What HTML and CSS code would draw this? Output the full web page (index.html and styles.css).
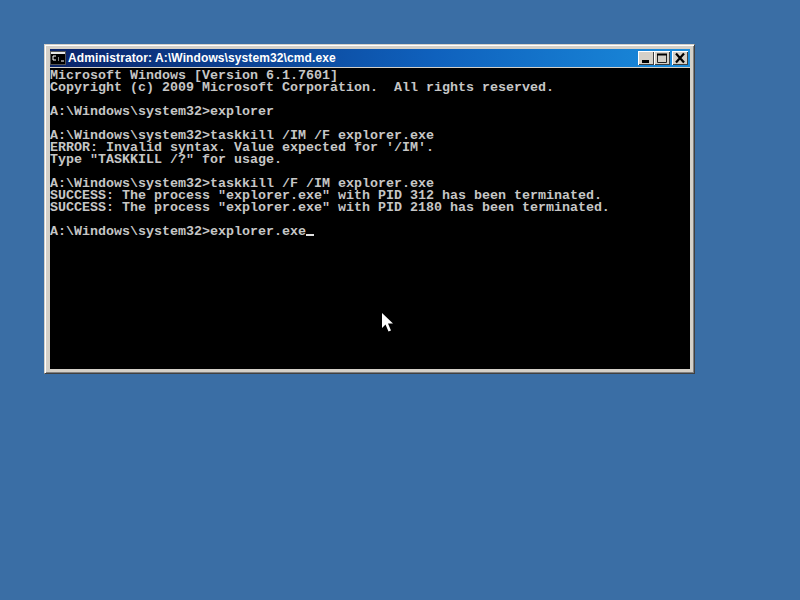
FILE: index.html
```html
<!DOCTYPE html>
<html lang="en">
<head>
<meta charset="utf-8">
<title>cmd.exe</title>
<link rel="stylesheet" href="styles.css">
</head>
<body>
<div class="window">
  <div class="titlebar">
    <svg class="appicon" width="16" height="14" viewBox="0 0 16 14">
      <rect x="0.5" y="0.5" width="15" height="13" fill="#e8e8e8" stroke="#555"/>
      <rect x="1" y="3" width="14" height="10" fill="#000"/>
      <path d="M3 5H6M3 5V9H6M8 7H9M8 9H9M11 10H14" stroke="#fff" fill="none"/>
    </svg>
    <span class="title">Administrator: A:\Windows\system32\cmd.exe</span>
    <div class="buttons">
      <div class="btn"><svg width="16" height="12" viewBox="0 0 16 12"><rect x="4" y="8" width="7" height="3" fill="#000"/></svg></div>
      <div class="btn"><svg width="16" height="12" viewBox="0 0 16 12"><path d="M3.5 2.5H12.5V10.5H3.5Z" fill="none" stroke="#222"/><path d="M3 2.5H13" stroke="#000" stroke-width="2"/></svg></div>
      <div class="btn btn-close"><svg width="16" height="12" viewBox="0 0 16 12"><path d="M4 1.5L12 10.5M12 1.5L4 10.5" stroke="#000" stroke-width="2.2"/></svg></div>
    </div>
  </div>
  <pre class="console">Microsoft Windows [Version 6.1.7601]
Copyright (c) 2009 Microsoft Corporation.  All rights reserved.

A:\Windows\system32&gt;explorer

A:\Windows\system32&gt;taskkill /IM /F explorer.exe
ERROR: Invalid syntax. Value expected for '/IM'.
Type "TASKKILL /?" for usage.

A:\Windows\system32&gt;taskkill /F /IM explorer.exe
SUCCESS: The process "explorer.exe" with PID 312 has been terminated.
SUCCESS: The process "explorer.exe" with PID 2180 has been terminated.

A:\Windows\system32&gt;explorer.exe<span class="caret"></span></pre>
</div>
<svg class="pointer" width="13" height="21" viewBox="0 0 13 21">
  <path d="M1 1V16L4.5 12.5L7.5 19.5L10 18.5L7 11.5H12Z" fill="#fff"/>
</svg>
</body>
</html>
```
FILE: styles.css
```css
html, body {
  margin: 0;
  padding: 0;
  width: 800px;
  height: 600px;
  overflow: hidden;
  background: #3a6ea5;
}
.window {
  position: absolute;
  left: 44px;
  top: 44px;
  width: 651px;
  height: 330px;
  box-sizing: border-box;
  display: flex;
  flex-direction: column;
  background: #d4d0c8;
  border: 1px solid;
  border-color: #d4d0c8 #404040 #404040 #d4d0c8;
  box-shadow: inset 1px 1px 0 #fff, inset -1px -1px 0 #808080;
  padding: 4px 4px 4px 5px;
}
.titlebar {
  height: 18px;
  flex: none;
  display: flex;
  align-items: center;
  background: linear-gradient(to right, #0a246a, #0f61bd 60%, #1a8cdc);
}
.appicon {
  flex: none;
  margin-right: 2px;
}
.title {
  font: bold 12px/18px "Liberation Sans", sans-serif;
  letter-spacing: 0.1px;
  color: #fff;
  white-space: nowrap;
}
.buttons {
  margin-left: auto;
  display: flex;
  margin-right: 2px;
}
.btn {
  width: 16px;
  height: 14px;
  box-sizing: border-box;
  background: #d4d0c8;
  box-shadow: inset 1px 1px 0 #fff, inset -1px -1px 0 #404040;
  display: flex;
  align-items: center;
  justify-content: center;
}
.btn-close {
  margin-left: 2px;
}
.console {
  flex: 1;
  margin: 1px 0 0;
  padding: 2px 0 0 0;
  background: #000;
  color: #c6c6c6;
  font: 13.33px/12px "Liberation Mono", monospace;
  font-weight: bold;
  overflow: hidden;
}
.caret {
  display: inline-block;
  width: 8px;
  height: 2px;
  background: #e0e0e0;
  vertical-align: -1px;
}
.pointer {
  position: absolute;
  left: 381px;
  top: 312px;
}
```
